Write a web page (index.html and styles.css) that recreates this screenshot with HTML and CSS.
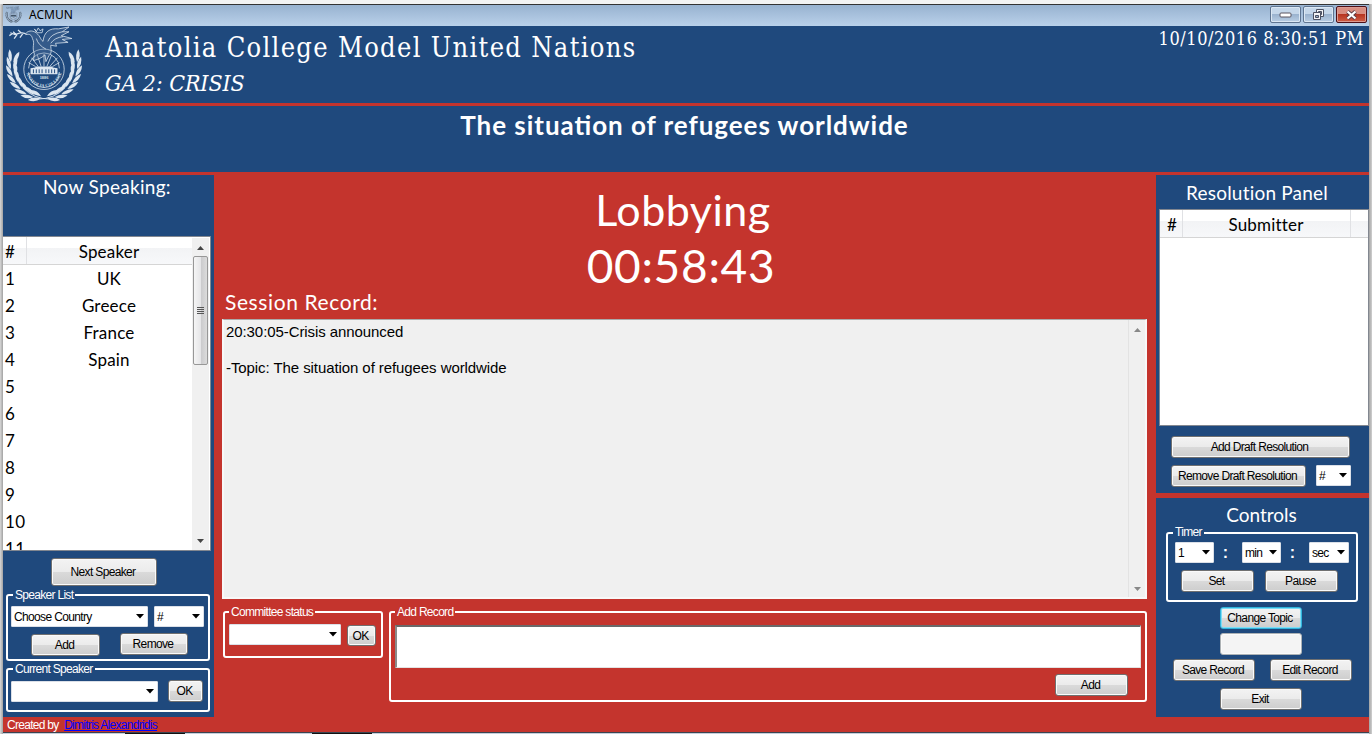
FILE: index.html
```html
<!DOCTYPE html>
<html lang="en">
<head>
<meta charset="utf-8">
<title>ACMUN</title>
<link rel="stylesheet" href="styles.css">
</head>
<body>
<svg class="defs" width="0" height="0">
  <defs>
    <g id="leaves">
      <path d="M43 75.500q-5 5.500-13 3.500q5-5 13-3.500z"/>
      <path d="M43 73q-5-6-12-4.500q4 5.500 12 4.500z"/>
    </g>
    <g id="branch">
      <use href="#leaves" transform="rotate(9 41 41)"/><use href="#leaves" transform="rotate(22 41 41)"/><use href="#leaves" transform="rotate(35 41 41)"/><use href="#leaves" transform="rotate(48 41 41)"/><use href="#leaves" transform="rotate(61 41 41)"/><use href="#leaves" transform="rotate(74 41 41)"/><use href="#leaves" transform="rotate(87 41 41)"/><use href="#leaves" transform="rotate(99 41 41)"/>
      <path d="M48 76Q30 76 19 64" fill="none" stroke="currentColor"/>
    </g>
    <path id="ring" d="M22.500 45a18.500 18.500 0 0 0 37 0"/>
    <g id="emblem">
      <g fill="currentColor"><use href="#branch"/><use href="#branch" transform="translate(82 0) scale(-1 1)"/></g>
      <g fill="none" stroke="currentColor" stroke-width=".8">
        <circle cx="41" cy="45" r="21"/>
        <path d="M25 44a16 16 0 0 1 32 0M25 48a16 16 0 0 0 32 0"/>
        <path d="M41 42V29M38 42l-4-12M44 42l5-12M35 42l-7-9M47 42l8-9M32 42l-7-4M50 42l7-4"/>
        <path stroke-width="1.300" d="M22 8l-5-1-6 2-5-2M17 7l-3-3M12 9l-3-3M19 8l-3 4M13 9l-3 4M8 8l-3 2"/>
        <path fill="#5d7ca3" fill-opacity=".35" d="M31 29C28 21 32 19 29 13C28 9 26 8 22 9C22 6 27 4 31 6C37 9 37 14 40 16C41 6 47 2 56 3L67 1L60 6L67 6L59 10L70 13L60 14L66 17L53 18L54 21L48 20C48 25 50 27 46 31L43 37L42 30C38 34 33 35 30 36z"/>
        <path d="M45 16Q48 8 60 6M48 18Q52 12 61 11M33 13Q35 20 43 24M31 3l2 3 2-4 2 3 3-2-1 4h-5z"/>
      </g>
      <path fill="currentColor" d="M27 44l5-1v-1h18v1l5 1v6H27z"/>
      <path d="M30 45v4M33 45v4M36 45v4M39 45v4M43 45v4M46 45v4M49 45v4M52 45v4" stroke="#1f497d"/>
      <text x="41" y="55.500" text-anchor="middle" class="seal">1886</text>
      <text class="seal"><textPath href="#ring" startOffset="4" textLength="50">ANATOLIA COLLEGE</textPath></text>
    </g>
    <path id="arrow" d="M0 0h8L4 4.500z"/>
  </defs>
</svg>
<div class="window">
  <div class="titlebar">
    <svg class="tb-icon" viewBox="0 0 82 80"><use href="#emblem"/></svg>
    <span class="tb-text">ACMUN</span>
    <div class="tb-btn"><svg width="13" height="7"><rect x="1" y="2" width="11" height="4" rx="1" fill="#fff" stroke="#5a5560"/></svg></div>
    <div class="tb-btn"><svg width="13" height="13" fill="#f4f4f6" stroke="#4c5162"><path d="M4.500 1.500h7v7h-7z"/><path d="M6.500 3.500h3v3h-3z" fill="#9ab0ca"/><path d="M1.500 4.500h7v7h-7z"/><path d="M3.500 7.500h3v2h-3z" fill="#9ab0ca"/></svg></div>
    <div class="tb-btn close"><svg width="13" height="10"><path d="M2.500 1.500l8 7M10.500 1.500l-8 7" stroke="#5c3a42" stroke-width="4"/><path d="M2.500 1.500l8 7M10.500 1.500l-8 7" stroke="#fff" stroke-width="2.300"/></svg></div>
  </div>

  <header class="header">
    <svg class="logo" width="82" height="77" viewBox="0 0 82 80"><use href="#emblem"/></svg>
    <div class="names">
      <div class="org">Anatolia College Model United Nations</div>
      <div class="committee">GA 2: CRISIS</div>
    </div>
    <div class="clock">10/10/2016 8:30:51 PM</div>
  </header>
  <div class="topic"><span>The situation of refugees worldwide</span></div>

  <main class="main">
    <aside class="panel left">
      <h2 class="now">Now Speaking:</h2>
      <div class="list speakers">
        <div class="table">
          <div class="tr th"><span class="num">#</span><span class="cell">Speaker</span></div>
          <div class="tr"><span class="num">1</span><span class="cell">UK</span></div>
          <div class="tr"><span class="num">2</span><span class="cell">Greece</span></div>
          <div class="tr"><span class="num">3</span><span class="cell">France</span></div>
          <div class="tr"><span class="num">4</span><span class="cell">Spain</span></div>
          <div class="tr"><span class="num">5</span></div>
          <div class="tr"><span class="num">6</span></div>
          <div class="tr"><span class="num">7</span></div>
          <div class="tr"><span class="num">8</span></div>
          <div class="tr"><span class="num">9</span></div>
          <div class="tr"><span class="num">10</span></div>
          <div class="tr"><span class="num">11</span></div>
        </div>
        <div class="scroll">
          <svg width="7" height="4"><path d="M0 4h7L3.500 0z" fill="#444"/></svg>
          <div class="thumb"><i></i><i></i><i></i><i></i></div>
          <svg class="down" width="7" height="4"><path d="M0 0h7L3.500 4z" fill="#444"/></svg>
        </div>
      </div>
      <div class="btn next">Next Speaker</div>
      <div class="group g-speakers"><span class="legend">Speaker List</span>
        <div class="row r1"><div class="combo country">Choose Country<svg width="8" height="5"><use href="#arrow"/></svg></div><div class="combo numsel">#<svg width="8" height="5"><use href="#arrow"/></svg></div></div>
        <div class="row r2"><div class="btn add">Add</div><div class="btn remove">Remove</div></div>
      </div>
      <div class="group g-current"><span class="legend">Current Speaker</span>
        <div class="row"><div class="combo current"><svg width="8" height="5"><use href="#arrow"/></svg></div><div class="btn ok">OK</div></div>
      </div>
    </aside>

    <section class="center">
      <div class="phase">Lobbying</div>
      <div class="timer">00:58:43</div>
      <div class="record-title">Session Record:</div>
      <div class="record">
        <div class="record-text">20:30:05-Crisis announced<br><br>-Topic: The situation of refugees worldwide</div>
        <div class="record-scroll"><svg width="7" height="4"><path d="M0 4h7L3.500 0z" fill="#888"/></svg><svg width="7" height="4"><path d="M0 0h7L3.500 4z" fill="#888"/></svg></div>
      </div>
      <div class="bottom">
        <div class="group g-status"><span class="legend">Committee status</span>
          <div class="row"><div class="combo status"><svg width="8" height="5"><use href="#arrow"/></svg></div><div class="btn ok2">OK</div></div>
        </div>
        <div class="group g-record"><span class="legend">Add Record</span>
          <div class="input"></div>
          <div class="btn add-record">Add</div>
        </div>
      </div>
    </section>

    <aside class="right">
      <div class="panel resolutions">
        <h2 class="res-title">Resolution Panel</h2>
        <div class="list submitters">
          <div class="tr th"><span class="num">#</span><span class="cell">Submitter</span><span class="rest"></span></div>
        </div>
        <div class="btn add-draft">Add Draft Resolution</div>
        <div class="row draft"><div class="btn rem-draft">Remove Draft Resolution</div><div class="combo draftnum">#<svg width="8" height="5"><use href="#arrow"/></svg></div></div>
      </div>
      <div class="panel controls">
        <h2 class="ctl-title">Controls</h2>
        <div class="group g-timer"><span class="legend">Timer</span>
          <div class="row times"><div class="combo t1">1<svg width="8" height="5"><use href="#arrow"/></svg></div><b>:</b><div class="combo t2">min<svg width="8" height="5"><use href="#arrow"/></svg></div><b>:</b><div class="combo t3">sec<svg width="8" height="5"><use href="#arrow"/></svg></div></div>
          <div class="row setpause"><div class="btn">Set</div><div class="btn">Pause</div></div>
        </div>
        <div class="btn wide focus">Change Topic</div>
        <div class="btn wide blank"></div>
        <div class="row saveedit"><div class="btn wide">Save Record</div><div class="btn wide">Edit Record</div></div>
        <div class="btn wide exit">Exit</div>
      </div>
    </aside>
  </main>
  <footer class="footer">Created by <a class="author">Dimitris Alexandridis</a></footer>
</div>
<div class="taskbar"><span></span><span></span></div>
</body>
</html>
```
FILE: styles.css
```css
* { box-sizing: border-box; }
body {
  margin: 0; width: 1372px; height: 734px; overflow: hidden;
  padding: 4px 3px 0;
  background: linear-gradient(90deg, #d8d8d8, #a2a2a2 3px, #a2a2a2 1369px, #d0d0d0);
  font: 12px/14px "Liberation Sans", Arial, sans-serif;
  letter-spacing: -0.65px; color: #000;
  box-shadow: inset 0 4px #f3f3f3;
}
.defs { position: absolute; }
.window { height: 728px; background: #c4342d; border-top: 1px solid #333; display: flex; flex-direction: column; }
.titlebar { height: 21px; flex: none; display: flex; align-items: flex-start; background: linear-gradient(#98b2d0, #b9d1ea); padding-right: 2px; }
.tb-icon { width: 17px; height: 17px; margin: 1px 7px 0 2px; color: #4b5867; }
.tb-text { flex: 1; font: 12px/19px "Noto Sans", sans-serif; letter-spacing: 0; }
.tb-btn { width: 31px; height: 17px; margin: 1px 0 0 2px; border: 1px solid #5f7591; border-radius: 2px; box-shadow: inset 0 0 0 1px #dbe7f3; background: linear-gradient(#c5d7ea 50%, #9bb3cf 50%, #b9cee4); display: flex; align-items: center; justify-content: center; }
.tb-btn.close { border-color: #4d1018; box-shadow: inset 0 0 0 1px #dd9a90; background: linear-gradient(#d88d80 50%, #b73521 50%, #cf5f46); }
.header { height: 77px; flex: none; display: flex; background: #1f497d; color: #fff; }
.logo { color: #dce6f0; }
.seal { font: bold 4.500px "Liberation Serif", serif; fill: currentColor; letter-spacing: 0; }
.names { flex: 1; padding-left: 20px; font-family: "DejaVu Serif Condensed", "DejaVu Serif", serif; font-stretch: condensed; }
.org { font-size: 27px; line-height: 43px; height: 41px; letter-spacing: 1.32px; white-space: nowrap; }
.committee { font-size: 23px; line-height: 33px; font-style: italic; letter-spacing: -0.1px; }
.clock { font: 18px/25px "DejaVu Serif Condensed", "DejaVu Serif", serif; font-stretch: condensed; letter-spacing: 0.57px; padding-right: 5px; }
.topic { height: 66px; flex: none; margin: 3px 0; background: #1f497d; color: #fff; text-align: center; font: bold 26px/39px Lato, sans-serif; letter-spacing: 0.95px; padding-right: 3px; font-feature-settings: "liga" 1; }
.main { height: 542px; flex: none; display: flex; }
.panel { background: #1f497d; }
h2 { margin: 0; color: #fff; text-align: center; font: 19px/24px Lato, sans-serif; letter-spacing: 0; }
.left { width: 211px; display: flex; flex-direction: column; }
.now { height: 61px; padding-right: 3px; line-height: 24px; letter-spacing: 0.3px; }
.list { background: #fff; border: 1px solid #828790; font: 17px/27px Lato, sans-serif; letter-spacing: 0; }
.speakers { width: 208px; height: 315px; border-left: 0; display: flex; overflow: hidden; }
.table { width: 189px; height: 313px; overflow: hidden; }
.tr { display: flex; height: 27px; line-height: 28px; }
.tr.th { height: 28px; line-height: 29px; border-bottom: 1px solid #d5d5d5; background: linear-gradient(#fff 40%, #f2f3f5 40%, #f7f8fa); }
.num { width: 24px; padding-left: 2px; letter-spacing: 0.3px; }
.cell { flex: 1; text-align: center; letter-spacing: 0.2px; padding-right: 1px; }
.th .num { border-right: 1px solid #e0e1e4; }
.scroll { width: 17px; background: #f0f0f0; display: flex; flex-direction: column; align-items: center; padding: 8px 1px 7px 0; margin-top: 1px; }
.scroll svg { flex: none; }
.scroll .down { margin-top: auto; }
.thumb { width: 15px; height: 109px; flex: none; margin-top: 6px; border: 1px solid #979797; border-radius: 2px; background: linear-gradient(90deg, #f5f5f5, #e6e6e8 50%, #cbcbcd 55%, #dcdcdc); display: flex; flex-direction: column; align-items: center; justify-content: center; gap: 1px; }
.thumb i { width: 7px; height: 1px; background: #555; }
.btn { height: 22px; line-height: 20px; padding-right: 2px; text-align: center; border: 1px solid #707070; border-radius: 3px; background: linear-gradient(#f3f3f3, #ebebeb 50%, #dadada 50%, #cdcdcd); box-shadow: inset 0 0 0 1px #fafafa; white-space: nowrap; flex: none; }
.row { display: flex; }
.combo { height: 21px; flex: none; background: #fff; border: 1px solid #dbe0e8; border-radius: 1px; padding: 0 3px 0 2px; display: flex; align-items: center; justify-content: space-between; white-space: nowrap; }
.combo svg { margin-left: auto; }
.next { width: 106px; height: 28px; line-height: 27px; margin: 7px 0 9px 48px; }
.group { position: relative; border: 2px solid #fff; border-radius: 3px; color: #000; }
.legend { position: absolute; top: -8px; left: 5px; padding: 0 2px 0 2px; line-height: 14px; color: #fff; background: #1f497d; white-space: nowrap; letter-spacing: -0.7px; }
.center .legend { background: #c4342d; left: 4px; }
.g-speakers { width: 204px; height: 67px; margin-left: 3px; padding: 10px 0 0 3px; top: -1px; }
.country { width: 137px; margin-right: 6px; }
.numsel { width: 50px; }
.r2 { margin: 6px 0 0 20px; }
.add { width: 69px; margin: 1px 20px 0 0; }
.remove { width: 68px; }
.g-current { width: 204px; height: 44px; margin: 6px 0 0 3px; padding: 10px 0 0 3px; }
.current { width: 147px; margin-right: 10px; margin-top: 1px; }
.ok { width: 35px; }
.center { width: 942px; color: #fff; }
.phase { height: 61px; margin-top: 5px; padding-right: 4px; text-align: center; font: 43px/60px Lato, sans-serif; letter-spacing: 0.5px; }
.timer { height: 48px; text-align: center; padding-right: 8px; font: 46px/50px Lato, sans-serif; letter-spacing: 0.7px; }
.record-title { height: 30px; padding-left: 11px; font: 21px/26px Lato, sans-serif; letter-spacing: 0.6px; }
.record { width: 925px; height: 280px; margin-left: 8px; border: 2px solid #f8f8f8; border-top: 1px solid #aaa; background: #f0f0f0; color: #000; display: flex; font: 15px/18px "Liberation Sans", Arial, sans-serif; letter-spacing: -0.08px; }
.record-text { flex: 1; padding: 3px 0 0 2px; }
.record-scroll { width: 17px; border-left: 1px solid #e3e3e3; display: flex; flex-direction: column; align-items: center; justify-content: space-between; padding: 8px 0 6px; }
.bottom { display: flex; margin-top: 12px; padding-left: 9px; }
.g-status { width: 160px; height: 47px; padding: 11px 0 0 4px; }
.status { width: 112px; margin-right: 6px; }
.ok2 { width: 29px; height: 21px; margin-top: 1px; }
.g-record { width: 758px; height: 91px; margin-left: 6px; padding: 12px 0 0 4px; }
.input { width: 746px; height: 43px; background: #fff; border: 1px solid #e3e3e3; border-top: 2px solid #696969; border-left: 2px solid #8a8a8a; }
.add-record { width: 73px; margin: 6px 0 0 660px; }
.right { width: 213px; }
.resolutions { height: 318px; padding-left: 3px; }
.res-title { height: 34px; line-height: 35px; padding-right: 14px; letter-spacing: 0.2px; }
.submitters { height: 217px; }
.submitters .num { width: 23px; padding-left: 7px; }
.rest { width: 18px; border-left: 1px solid #e0e1e4; }
.add-draft { width: 179px; margin: 10px 0 0 12px; }
.draft { margin: 7px 0 0 12px; }
.rem-draft { width: 135px; margin-right: 10px; }
.draftnum { width: 35px; }
.controls { height: 219px; margin-top: 5px; padding: 0 0 0 10px; display: flex; flex-direction: column; }
.ctl-title { height: 34px; line-height: 34px; padding-right: 12px; }
.g-timer { width: 192px; height: 70px; padding: 8px 0 0 7px; margin-bottom: 5px; top: 0; }
.g-timer .legend { top: -9px; }
.times b { width: 28px; padding-right: 5px; text-align: center; font: bold 16px/22px "Liberation Sans", sans-serif; color: #fff; letter-spacing: 0; }
.t1, .t2 { width: 39px; }
.t3 { width: 40px; }
.setpause { margin: 6px 0 0 6px; gap: 11px; }
.setpause .btn { width: 73px; }
.wide { width: 82px; height: 22px; margin-left: 54px; }
.focus { border-color: #2fb4dc; box-shadow: inset 0 0 0 1px #7fdcf5; }
.blank { margin-top: 4px; background: #f4f4f4; border-color: #adb2b5; }
.saveedit { margin: 4px 0 7px 7px; gap: 15px; }
.saveedit .wide { margin: 0; }
.footer { height: 14px; line-height: 16px; padding-left: 4px; color: #fff; letter-spacing: -0.72px; }
.author { margin-left: 3px; color: #00f; text-decoration: underline; }
.taskbar { height: 2px; background: #c6cedb; border-top: 1px solid #3b4450; padding-left: 122px; display: flex; gap: 127px; }
.taskbar span { width: 60px; height: 1px; background: #111; }
```
